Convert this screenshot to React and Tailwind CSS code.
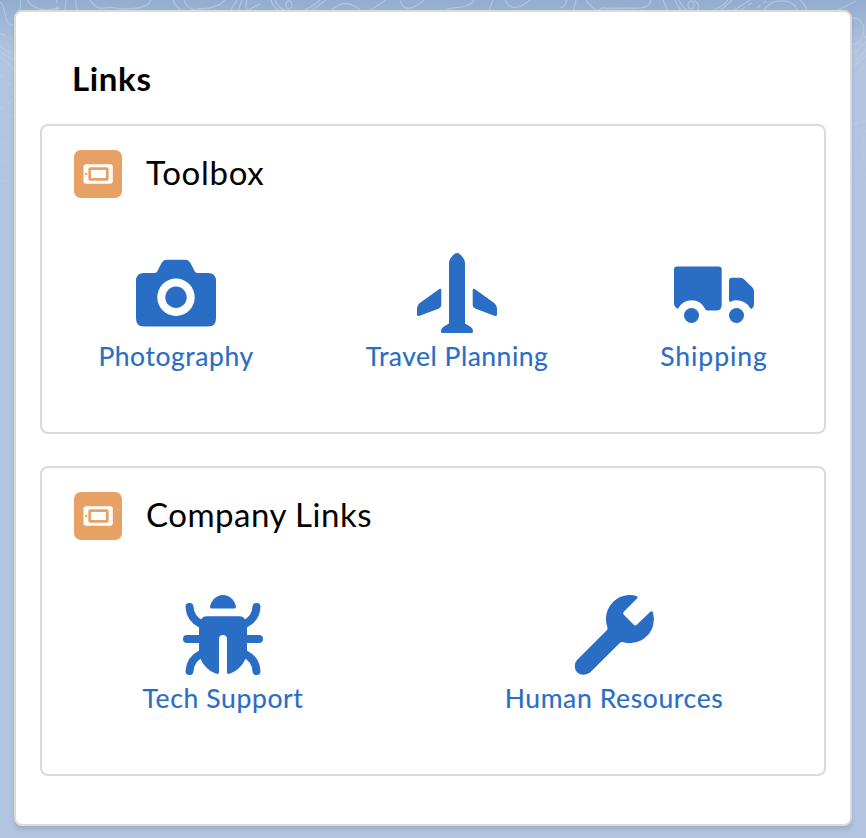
import React from "react";

function Contours() {
  return (
    <svg className="absolute inset-x-0 top-0 -z-10" width="866" height="220" viewBox="0 0 866 220" fill="none" stroke="#bccde6" strokeOpacity=".7" strokeWidth="1.3">
      <path d="M0 2C6 6 4 22 10 25S22 14 20 0" />
      <path d="M27 0C34 9 42 12 60 8" />
      <path d="M66 0L65 12M76 0Q75 5 78 12" />
      <path d="M57 11V0" strokeDasharray="5 3" />
      <path d="M90 0C94 5 98 10 105 8S113 8 121 9Q149 9 151 0" />
      <path d="M173 0Q176 7 182 11M184 0Q189 12 198 9Q217 9 225 0M237 0L230 11M242 0L238 11M247 0Q244 8 248 10L260 4" />
      <path d="M271 0Q272 7 280 11M275 0Q278 9 288 11" />
      <ellipse cx="289" cy="5" rx="3" ry="4" />
      <path d="M303 11Q315 5 320 0M311 11L326 0M330 11Q346 -4 361 11M369 11L386 0M400 0Q405 17 424 0M445 11C451 5 468 11 474 0M493 0L489 11M505 0Q512 15 530 0" />
      <path d="M560 8Q566 6 567 0M573 12L576 0M586 0Q597 15 602 8Q609 9 628 8Q650 10 651 0M663 0Q665 6 668 10M675 0Q678 8 682 11M679 0Q683 9 687 10" />
      <ellipse cx="691" cy="5" rx="3" ry="4" />
      <path d="M694 0Q702 6 697 11M714 10Q724 6 728 0M720 11L732 0M733 11L750 0" />
      <path d="M741 10L752 3M757 8L766 1" strokeDasharray="5 3" />
      <path d="M763 11Q770 1 779 1Q794 0 797 10M800 0Q805 4 807 11M838 10L856 1" />
      <path d="M0 34Q11 35 14 42" strokeDasharray="6 4" />
      <path d="M0 46Q5 51 14 54M0 51Q5 56 14 60M0 57Q8 62 14 70" />
      <path d="M0 75Q12 83 14 96M0 109L14 99" strokeDasharray="6 4" />
      <path d="M0 125Q5 117 14 116M0 141Q9 143 14 151M0 163Q10 159 14 164M0 181Q9 180 14 185" strokeOpacity=".45" />
      <path d="M852 18Q862 17 864 29Q863 42 852 45M852 55L866 42M852 62Q862 58 866 48M852 67Q861 62 866 55" />
      <path d="M852 52L866 36M852 76L866 66M852 124L866 121" strokeDasharray="6 3" />
      <path d="M866 130Q860 139 864 158M852 158Q855 169 866 176M852 182Q861 178 866 183" strokeOpacity=".4" />
    </svg>
  );
}

function CameraIcon() {
  return (
    <svg width="80" height="80" viewBox="0 0 80 80" fill="currentColor">
      <path fillRule="evenodd" d="M8 20h10.500Q20.500 20 21.500 18L25 11Q27 6.700 31 6.700H49Q53 6.700 55 11L58.500 18Q59.500 20 61.500 20H72Q80 20 80 28V65.500Q80 73.500 72 73.500H8Q0 73.500 0 65.500V28Q0 20 8 20ZM40 25.600a18.700 18.700 0 1 0 0 37.400a18.700 18.700 0 1 0 0-37.400Z" />
      <circle cx="40" cy="44.300" r="10.700" />
    </svg>
  );
}

function PlaneIcon() {
  return (
    <svg width="80" height="80" viewBox="0 0 80 80" fill="currentColor">
      <path d="M40 0Q42 0 44 2.300Q48 6.500 48 10V70.500L53.500 73.800Q56 75.500 56 78.500Q56 80 54.500 80H25.500Q24 80 24 78.500Q24 75.500 26.500 73.800L32 70.500V10Q32 6.500 36 2.300Q38 0 40 0Z" />
      <path d="M22 36.200Q24.300 35 24.300 37V52Q24.300 54.500 22 55.400L2 63Q0 63.500 0 61.500V56Q0 52 3.500 49.500ZM58 36.200Q55.700 35 55.700 37V52Q55.700 54.500 58 55.400L78 63Q80 63.500 80 61.500V56Q80 52 76.500 49.500Z" />
    </svg>
  );
}

function TruckIcon() {
  return (
    <svg width="80" height="80" viewBox="0 0 80 80" fill="currentColor">
      <path d="M3 13.500H44.700Q47.700 13.500 47.700 16.500V52Q47.700 57.500 42.200 57.500H33Q32 57.500 31.500 56.500Q27 47.300 17.500 47.300Q9 47.300 4.500 55Q3.800 56.300 2.500 55.300Q0 53.500 0 51V16.500Q0 13.500 3 13.500Z" />
      <path d="M58 24.700H67Q68.500 24.700 70 26.200L78.500 34.500Q80 36 80 38V51Q80 54 78 55.500Q76.800 56.300 76 55Q71.500 47.300 62.500 47.300Q59.500 47.300 57 48.500Q55 49.200 55 47.500V27.700Q55 24.700 58 24.700Z" />
      <circle cx="17.500" cy="62.500" r="7.500" />
      <circle cx="62.500" cy="62.500" r="7.500" />
    </svg>
  );
}

function BugIcon() {
  return (
    <svg width="80" height="80" viewBox="0 0 80 80" fill="currentColor">
      <path d="M28.500 13.500Q26.800 13.500 27 11.500C29 4 34 0 40 0S51 4 53 11.500Q53.200 13.500 51.500 13.500Z" />
      <path d="M23.500 21.300H56.500Q60 21.300 62 24.500L64 31V56C63.500 67 56 75.500 46.500 78.800Q44 79.500 44 77V44Q44 40 40 40T36 44V77Q36 79.500 33.500 78.800C24 75.500 16.500 67 16 56V31L18 24.500Q20 21.300 23.500 21.300Z" />
      <g fill="none" stroke="currentColor" strokeWidth="8" strokeLinecap="round">
        <path d="M6.500 12C7 20 11 25.500 18 29M73.500 12C73 20 69 25.500 62 29M4 44H20M60 44H76M6.500 76C7 68 11 62.500 18 59M73.500 76C73 68 69 62.500 62 59" />
      </g>
    </svg>
  );
}

function WrenchIcon() {
  return (
    <svg className="overflow-visible" width="80" height="80" viewBox="-0.8 0 80 80" fill="currentColor">
      <path d="M61.500 .9Q63.800 1.600 62.200 3.400L49 16.800Q47.700 18.300 49 19.800L59 29.800Q60.500 31.300 62 29.800L75.500 16.800Q77.300 15.300 78.200 17.500A24 24 0 0 1 48.500 47.200Q46.500 46.500 45 48L15 77.800Q8 82 2.400 77.600Q0 75 0 71.500Q0 67.200 2 65.200L32 35.200Q33.200 34 32.600 32.200A24 24 0 0 1 61.500 .9Z" />
    </svg>
  );
}

function AppTile() {
  return (
    <svg className="shrink-0" width="48" height="48" viewBox="0 0 48 48">
      <rect width="48" height="48" rx="7" fill="#e8a164" />
      <rect x="9.500" y="14.200" width="29.300" height="19.600" rx="2.800" fill="#fff" />
      <rect x="15.700" y="18.700" width="17.600" height="10.600" rx=".5" fill="#fff" stroke="#e8a164" strokeWidth="2.700" />
      <circle cx="12.200" cy="24" r="1.200" fill="#e8a164" />
    </svg>
  );
}

function Link({ icon, children, className }) {
  return (
    <a className={`flex flex-col items-center text-[26.5px] leading-[32px] whitespace-nowrap text-[#2a6dc5] [-webkit-text-stroke:0.15px] ${className}`}>
      {icon}
      <span className="mt-[7px]">{children}</span>
    </a>
  );
}

function Panel({ title, titleClass, children }) {
  return (
    <section className="h-[310px] rounded-lg border-2 border-[#dadada] pt-6">
      <header className="flex h-12 items-center gap-6 pl-8">
        <AppTile />
        <h2 className={`pb-1 text-[33px] leading-[40px] text-black ${titleClass}`}>{title}</h2>
      </header>
      <div className="mt-[55px] flex justify-around">{children}</div>
    </section>
  );
}

export default function App() {
  return (
    <main className="relative isolate h-[838px] w-[866px] overflow-hidden bg-[#b2c4df] bg-[linear-gradient(#93adce_0px,#9ab2d3_12px,#b2c4df_52px)] px-[14px] pt-[10px] font-['Lato',sans-serif]">
      <Contours />
      <div className="h-[816px] rounded-lg border-2 border-[#dadada] bg-white px-6 shadow-[0_4px_4px_rgba(0,0,0,0.1)]">
        <h1 className="ml-8 pt-[46px] text-[33px] leading-[40px] font-bold tracking-[0.65px] text-black">Links</h1>
        <div className="mt-[26px] flex flex-col gap-8">
          <Panel title="Toolbox" titleClass="tracking-[0.7px]">
            <Link className="w-[156px] tracking-[0.55px]" icon={<CameraIcon />}>Photography</Link>
            <Link className="w-[182px] tracking-[0.5px]" icon={<PlaneIcon />}>Travel Planning</Link>
            <Link className="w-[108px] tracking-[0.95px]" icon={<TruckIcon />}>Shipping</Link>
          </Panel>
          <Panel title="Company Links" titleClass="tracking-[0.5px]">
            <Link className="w-[160px] tracking-[0.63px]" icon={<BugIcon />}>Tech Support</Link>
            <Link className="w-[218px] tracking-[0.63px]" icon={<WrenchIcon />}>Human Resources</Link>
          </Panel>
        </div>
      </div>
    </main>
  );
}
